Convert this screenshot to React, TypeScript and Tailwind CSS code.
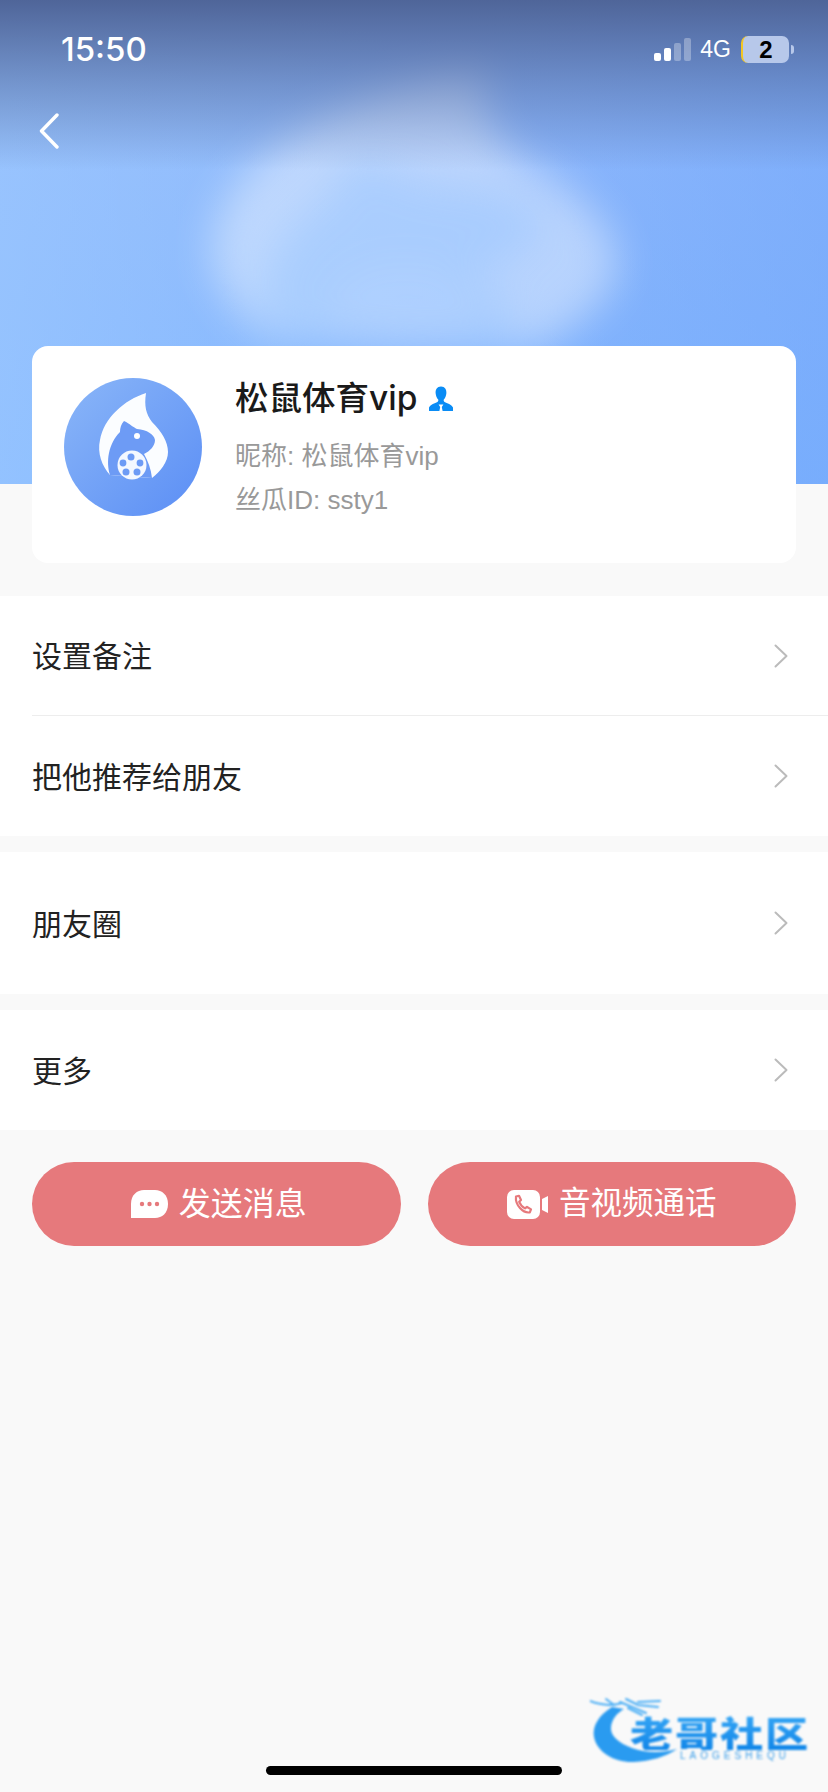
const cjk = '"Liberation Sans", "Noto Sans CJK SC", sans-serif';

const FLAME = 'M82 15C60 22 40 40 36 62C33 75 38 88 46 97L88 100C96 94 104 84 104 74C104 64 98 54 88 44C82 36 80 28 82 15Z';
const SQUIRREL =
  'M60 43C66 46 69 49 73 51C83 52 90 56 91 62C91 68 86 73 80 76C84 83 87 91 88 100L46 97C42 84 44 66 56 54C56 50 57 46 60 43Z';

// Shared brand mark: flame with a squirrel holding a football
function BrandMark() {
  return (
    <svg viewBox="0 0 138 138" className="h-full w-full">
      <defs>
        <linearGradient id="avatarBg" x1="0" y1="0" x2="1" y2="1">
          <stop offset="0" stopColor="#8ab6f8" />
          <stop offset="1" stopColor="#5b8ef5" />
        </linearGradient>
      </defs>
      <circle cx="69" cy="69" r="69" fill="url(#avatarBg)" />
      <path d={FLAME} fill="#fbfdff" />
      <path d={SQUIRREL} fill="#6d9bf5" />
      <circle cx="73" cy="58" r="3" fill="#fff" />
      <circle cx="68" cy="87" r="14.5" fill="#f4f8ff" />
      <g fill="#6d9bf5">
        <circle cx="67" cy="79" r="3.5" />
        <circle cx="59" cy="85" r="3.4" />
        <circle cx="76" cy="85" r="3.4" />
        <circle cx="62" cy="94" r="3.5" />
        <circle cx="73" cy="94" r="3.5" />
      </g>
    </svg>
  );
}

function StatusBar() {
  return (
    <div className="relative flex h-[113px] items-start justify-between pl-[61px] pr-[34px] pt-[36px]">
      <span className="font-['Inter'] text-[33px] leading-[27px] font-medium text-white">15:50</span>
      <div className="flex items-start">
        <div className="mt-[2px] flex h-[23px] items-end gap-[3px]">
          <span className="h-[8px] w-[7px] rounded-[2px] bg-white" />
          <span className="h-[13px] w-[7px] rounded-[2px] bg-white" />
          <span className="h-[18px] w-[7px] rounded-[2px] bg-white/30" />
          <span className="h-[23px] w-[7px] rounded-[2px] bg-white/30" />
        </div>
        <span className="ml-[9px] font-['Liberation_Sans'] text-[23px] leading-[27px] text-white">4G</span>
        <div className="ml-[10px] flex h-[27px] w-[48px] items-center justify-center overflow-hidden rounded-[7px] border-l-[2px] border-[#f3c623] bg-[#b7c8ea]">
          <span className="font-['Liberation_Sans'] text-[24px] leading-none font-bold text-black">2</span>
        </div>
        <span className="mt-[9px] ml-[2px] h-[9px] w-[3px] rounded-r-full bg-[#b7c8ea]" />
      </div>
    </div>
  );
}

function Hero() {
  return (
    <div className="relative h-[484px] overflow-hidden bg-gradient-to-b from-[#8fb8fb] from-30% to-[#7db4ff]">
      <div className="absolute inset-0 bg-gradient-to-r from-[#9cc8ff]/70 via-transparent to-[#74a8fb]/60" />
      {/* large washed-out mark behind the header */}
      <svg
        viewBox="36 15 68 84"
        preserveAspectRatio="none"
        className="absolute top-[60px] left-[216px] h-[290px] w-[402px] overflow-visible blur-[20px]"
      >
        <path d={FLAME} fill="#ffffff" fillOpacity="0.42" />
        <path d={SQUIRREL} fill="#8fc0ff" fillOpacity="0.4" />
        <circle cx="68" cy="87" r="13" fill="#ffffff" fillOpacity="0.08" />
      </svg>
      <div className="absolute inset-x-0 top-0 h-[170px] bg-gradient-to-b from-[#4f6599] via-[#51699f]/50 to-transparent" />
      <StatusBar />
      <button className="relative ml-[38px] block">
        <svg width="22" height="36" viewBox="0 0 22 36" fill="none">
          <path d="M19 2L3.5 18L19 34" stroke="#fff" strokeWidth="3.4" strokeLinecap="round" strokeLinejoin="round" />
        </svg>
      </button>
    </div>
  );
}

function VipBadge() {
  return (
    <svg viewBox="0 0 26 26" className="ml-[11px] h-[26px] w-[26px]">
      <path
        d="M13 0.5C17 0.5 18.6 3.6 18.4 7C18.2 10 17 12.2 15.8 13.6C15.4 14.5 15.8 15.5 16.6 16C19 17.2 23.5 18.4 25 21.5V25H1V21.5C2.5 18.4 7 17.2 9.4 16C10.2 15.5 10.6 14.5 10.2 13.6C9 12.2 7.8 10 7.6 7C7.4 3.6 9 0.5 13 0.5Z"
        fill="#0a8cf5"
      />
      <path d="M10.6 18.6H15.4L13.8 21L14.6 25H11.4L12.2 21Z" fill="#fff" />
    </svg>
  );
}

function ProfileCard() {
  return (
    <div className="relative mx-8 -mt-[138px] flex h-[217px] rounded-[16px] bg-white pt-8 pl-8">
      <div className="h-[138px] w-[138px] shrink-0">
        <BrandMark />
      </div>
      <div className="ml-[33px]">
        <div className="-mt-[1px] flex h-[44px] items-center">
          <span
            className="text-[33.5px] leading-none font-medium text-[#1a1a1a]"
            style={{ fontFamily: '"Inter", "Noto Sans CJK SC", sans-serif' }}
          >
            松鼠体育vip
          </span>
          <VipBadge />
        </div>
        <p className="mt-[17px] text-[26px] leading-[36px] text-[#999]">昵称: 松鼠体育vip</p>
        <p className="mt-[8px] text-[26px] leading-[36px] text-[#999]">丝瓜ID: ssty1</p>
      </div>
    </div>
  );
}

function RowChevron() {
  return (
    <svg width="14" height="24" viewBox="0 0 14 24" fill="none">
      <path d="M1.5 1.5L12.5 12L1.5 22.5" stroke="#bbb" strokeWidth="2" strokeLinecap="round" strokeLinejoin="round" />
    </svg>
  );
}

function Row({ label, className }: { label: string; className: string }) {
  return (
    <div className={`flex items-center justify-between pr-[40px] ${className}`}>
      <span className="pt-[3px] text-[30px] leading-none text-[#222]">{label}</span>
      <RowChevron />
    </div>
  );
}

function MessageIcon() {
  return (
    <svg viewBox="0 0 37 28" className="h-[28px] w-[37px]">
      <path d="M13 0H24C31 0 37 5 37 14C37 23 31 28 24 28H0V14C0 5 6 0 13 0Z" fill="#fff" />
      <circle cx="11" cy="14" r="2.2" fill="#e6797c" />
      <circle cx="18.5" cy="14" r="2.2" fill="#e6797c" />
      <circle cx="26" cy="14" r="2.2" fill="#e6797c" />
    </svg>
  );
}

function VideoCallIcon() {
  return (
    <svg viewBox="0 0 41 29" className="h-[29px] w-[41px]">
      <rect x="0" y="0" width="33" height="29" rx="7" fill="#fff" />
      <path d="M35 9L41 6V23L35 20Z" fill="#fff" />
      <path
        d="M9 6.5L12 5.8L14 10L12.2 11.8C13.2 14.4 15.2 16.8 18 18.4L20 16.8L24 19.4L22.8 22.4C16 23.4 8 15 9 6.5Z"
        fill="none"
        stroke="#e6797c"
        strokeWidth="2.2"
        strokeLinejoin="round"
      />
    </svg>
  );
}

// Faint community watermark in the lower right corner
function Watermark() {
  return (
    <div className="absolute top-[1693px] left-[590px] h-[72px] w-[224px] blur-[0.9px]">
      <svg viewBox="0 0 224 72" className="absolute inset-0 h-full w-full">
        <path
          d="M22 14C9 22 2 33 4 44C7 60 26 70 44 69C60 68 76 64 87 56C72 60 56 60 42 55C29 50 20 43 21 34C22 26 27 20 34 16Z"
          fill="#2a9bf0"
        />
        <g stroke="#4aaef5" strokeWidth="2" strokeLinecap="round" fill="none">
          <path d="M0 8C10 12 22 13 32 10" />
          <path d="M16 6L24 12" />
          <path d="M30 9L42 14L56 20" />
          <path d="M36 6L48 12L68 14" />
          <path d="M48 9L70 8" />
          <path d="M38 15L52 22" />
        </g>
      </svg>
      <span
        className="absolute top-[21px] left-[40px] origin-left scale-x-[1.2] bg-gradient-to-b from-[#35a6f5] to-[#0f86e8] bg-clip-text text-[36px] leading-[36px] font-black tracking-[1.5px] whitespace-nowrap text-transparent"
        style={{ fontFamily: '"Noto Sans CJK SC", sans-serif' }}
      >
        老哥社区
      </span>
      <span className="absolute top-[57px] left-[90px] font-['Liberation_Sans'] text-[10px] leading-[12px] tracking-[4px] whitespace-nowrap text-[#3a9de8]">
        LAOGESHEQU
      </span>
    </div>
  );
}

export default function App() {
  return (
    <div className="relative flex h-[1792px] w-[828px] flex-col overflow-hidden bg-[#f9f9f9]" style={{ fontFamily: cjk }}>
      <Hero />
      <ProfileCard />

      <div className="mt-[33px] bg-white pl-8">
        <Row label="设置备注" className="h-[119px]" />
        <div className="h-px bg-[#ededed]" />
        <Row label="把他推荐给朋友" className="h-[120px]" />
      </div>
      <div className="mt-4 bg-white pl-8">
        <Row label="朋友圈" className="h-[142px]" />
      </div>
      <div className="mt-4 bg-white pl-8">
        <Row label="更多" className="h-[120px]" />
      </div>

      <div className="mx-8 mt-8 flex gap-[27px]">
        <button className="flex h-[84px] w-[369px] items-center justify-center gap-[11px] rounded-[42px] bg-[#e6797c] pl-[5px] text-[32px] leading-none text-white">
          <MessageIcon />
          发送消息
        </button>
        <button className="flex h-[84px] w-[369px] items-center justify-center gap-[11px] rounded-[42px] bg-[#e6797c] text-[31.5px] leading-none text-white">
          <VideoCallIcon />
          音视频通话
        </button>
      </div>

      <div className="mt-auto mb-[17px] flex justify-center">
        <span className="h-[9px] w-[296px] rounded-full bg-black" />
      </div>
      <Watermark />
    </div>
  );
}
